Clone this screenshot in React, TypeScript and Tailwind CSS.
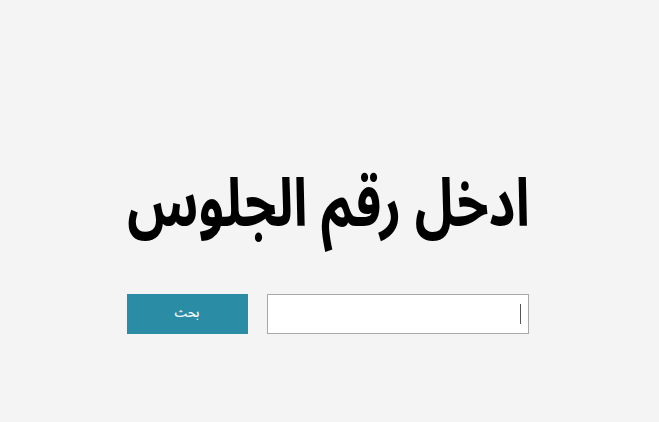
export default function App() {
  return (
    <div className="w-[659px] h-[422px] bg-[#f4f4f4] flex flex-col items-center" style={{ fontFamily: '"Noto Sans Arabic", "DejaVu Sans", sans-serif' }} dir="rtl">
      <h1 className="mt-[170px] text-[52px] font-bold leading-[1.4] text-black ml-[-2px] scale-y-[1.28]">ادخل رقم الجلوس</h1>
      <div className="mt-[51px] flex gap-[19px] items-center mr-[4px]">
        <div className="w-[262px] h-[40px] bg-white border border-[#a8a8a8] flex items-center px-[7px]">
          <div className="w-[1px] h-[20px] bg-[#555]" />
        </div>
        <button className="w-[121px] h-[40px] bg-[#2b8da5] text-[#eef8fa] text-[12px] font-semibold">بحث</button>
      </div>
    </div>
  );
}
